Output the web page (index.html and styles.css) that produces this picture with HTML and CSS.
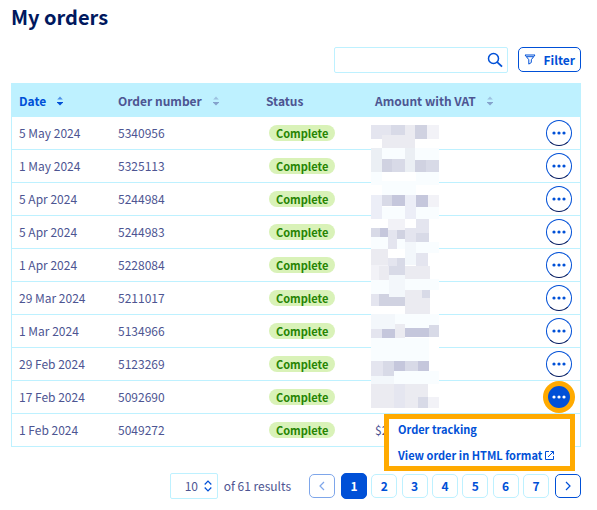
FILE: index.html
```html
<!DOCTYPE html>
<html lang="en">
<head>
    <meta charset="UTF-8">
    <title>My orders</title>
    <link rel="stylesheet" href="styles.css">
</head>
<body>

    <svg class="defs" aria-hidden="true">
        <symbol id="sort" viewBox="0 0 6 10">
            <path opacity="0.6" d="M0.2 3.6 L3 0.6 L5.8 3.6z"/>
            <path d="M0 6 H6 V6.6 L3 9.6 L0 6.6z"/>
        </symbol>
        <symbol id="dots" viewBox="0 0 14 4">
            <circle cx="2" cy="2" r="1.6"/>
            <circle cx="7" cy="2" r="1.6"/>
            <circle cx="12" cy="2" r="1.6"/>
        </symbol>
    </svg>

    <h1 class="title">My orders</h1>

    <div class="toolbar">
        <div class="search">
            <input type="text" class="search-input" aria-label="Search orders">
            <button class="search-btn" aria-label="Search">
                <svg width="16" height="16" viewBox="0 0 16 16"><circle cx="6.5" cy="6.5" r="5" fill="none" stroke="currentColor" stroke-width="1.5"/><path d="M10.2 10.2 L15 14.6" stroke="currentColor" stroke-width="1.8"/></svg>
            </button>
        </div>
        <button class="filter-btn">
            <svg width="12" height="12" viewBox="0 0 12 12"><path d="M1 1 H11 L7.3 5.7 V8.5 L4.8 10.1 V5.7z M2.5 2.7 H9.5" fill="none" stroke="currentColor" stroke-width="1" stroke-linejoin="round"/></svg>
            Filter
        </button>
    </div>

    <div class="table-box">
        <table class="orders">
            <colgroup>
                <col class="col-date">
                <col class="col-number">
                <col class="col-status">
                <col>
                <col class="col-actions">
            </colgroup>
            <thead>
                <tr>
                    <th><button class="sort-btn active">Date <svg><use href="#sort"/></svg></button></th>
                    <th><button class="sort-btn">Order number <svg><use href="#sort"/></svg></button></th>
                    <th>Status</th>
                    <th><button class="sort-btn">Amount with VAT <svg><use href="#sort"/></svg></button></th>
                    <th></th>
                </tr>
            </thead>
            <tbody>
                <tr><td>5 May 2024</td><td>5340956</td><td><span class="badge">Complete</span></td><td></td><td class="actions"><button class="more" aria-label="Actions"><svg><use href="#dots"/></svg></button></td></tr>
                <tr><td>1 May 2024</td><td>5325113</td><td><span class="badge">Complete</span></td><td></td><td class="actions"><button class="more" aria-label="Actions"><svg><use href="#dots"/></svg></button></td></tr>
                <tr><td>5 Apr 2024</td><td>5244984</td><td><span class="badge">Complete</span></td><td></td><td class="actions"><button class="more" aria-label="Actions"><svg><use href="#dots"/></svg></button></td></tr>
                <tr><td>5 Apr 2024</td><td>5244983</td><td><span class="badge">Complete</span></td><td></td><td class="actions"><button class="more" aria-label="Actions"><svg><use href="#dots"/></svg></button></td></tr>
                <tr><td>1 Apr 2024</td><td>5228084</td><td><span class="badge">Complete</span></td><td></td><td class="actions"><button class="more" aria-label="Actions"><svg><use href="#dots"/></svg></button></td></tr>
                <tr><td>29 Mar 2024</td><td>5211017</td><td><span class="badge">Complete</span></td><td></td><td class="actions"><button class="more" aria-label="Actions"><svg><use href="#dots"/></svg></button></td></tr>
                <tr><td>1 Mar 2024</td><td>5134966</td><td><span class="badge">Complete</span></td><td></td><td class="actions"><button class="more" aria-label="Actions"><svg><use href="#dots"/></svg></button></td></tr>
                <tr><td>29 Feb 2024</td><td>5123269</td><td><span class="badge">Complete</span></td><td></td><td class="actions"><button class="more" aria-label="Actions"><svg><use href="#dots"/></svg></button></td></tr>
                <tr>
                    <td>17 Feb 2024</td><td>5092690</td><td><span class="badge">Complete</span></td><td></td>
                    <td class="actions">
                        <button class="more open" aria-label="Actions" aria-expanded="true"><svg><use href="#dots"/></svg></button>
                        <div class="menu">
                            <a href="#">Order tracking</a>
                            <a href="#">View order in HTML format
                                <svg width="9" height="9" viewBox="0 0 9 9"><path d="M4 0.5 H0.5 V8.5 H8.5 V5 M5.5 0.5 H8.5 V3.5 M8.5 0.5 L3 6" fill="none" stroke="currentColor"/></svg>
                            </a>
                        </div>
                    </td>
                </tr>
                <tr><td>1 Feb 2024</td><td>5049272</td><td><span class="badge">Complete</span></td><td>$2</td><td class="actions"><button class="more" aria-label="Actions"><svg><use href="#dots"/></svg></button></td></tr>
            </tbody>
        </table>

        <!-- pixelated amounts -->
        <svg class="mosaic" viewBox="33 30 204 849" preserveAspectRatio="none" shape-rendering="crispEdges" aria-hidden="true">
            <path fill="#fff" d="M33 30h204v849H33z"/>
            <path fill="#f9fdff" d="M66 99h69v33H66zM165 99h72v36h-72zM33 171h33v38H33zM168 171h69v38h-69zM66 199h102v41H66zM66 276h69v36H66zM168 276h69v36h-69zM33 366h51v36H33zM111 372h24v30h-24zM168 381h69v33h-69zM33 495h54v42H33zM135 492h102v33H135zM105 597h132v42H105zM33 669h174v69H33zM102 768h135v39H102z"/>
            <path fill="#f3f7fb" d="M33 597h72v45H33zM135 381h33v69h-33zM87 480h48v66H87zM33 783h69v24H33z"/>
            <path fill="#f2f2f7" d="M201 30h36v42h-36zM204 240h33v36h-33zM84 312h51v33H84zM33 435h51v18H33zM33 453h24v42H33zM204 846h33v33h-33z"/>
            <path fill="#ebeff4" d="M33 99h33v72H33zM135 99h30v72h-30z"/>
            <path fill="#eceef7" d="M33 240h33v72H33zM135 240h33v72h-33z"/>
            <path fill="#e4e5ef" d="M33 30h33v42H33zM66 30h27v30H66zM168 312h39v42h-39zM84 345h27v57H84zM135 339h33v42h-33zM84 429h27v24H84zM168 414h36v39h-36zM33 537h24v36H33zM33 642h33v27H33zM33 738h36v45H33z"/>
            <path fill="#ebebf1" d="M135 30h30v69h-30zM66 60h69v39H66zM33 402h51v48H33zM57 453h30v42H57zM135 453h75v39h-75zM135 525h75v72h-75zM105 627h30v42h-30zM33 807h171v72H33z"/>
            <path fill="#d8dae7" d="M93 30h42v30H93zM66 240h30v33H66zM33 339h27v27H33zM111 429h24v24h-24zM87 453h48v27H87zM168 354h39v27h-39zM198 135h39v36h-39zM96 132h39v39H96zM186 525h24v24h-24zM207 630h30v36h-30zM69 738h33v45H69zM135 738h39v30h-39zM174 846h30v33h-30z"/>
            <path fill="#d0d2e1" d="M165 30h36v42h-36zM66 132h30v39H66zM165 135h33v36h-33zM57 537h30v36H57zM87 546h48v27H87zM111 345h24v27h-24z"/>
            <path fill="#c5c7dc" d="M96 240h39v33H96zM168 240h36v36h-36zM60 339h24v27H60zM66 642h39v27H66zM135 639h72v27h-72zM102 738h33v30h-33zM174 738h33v30h-33z"/>
            <path fill="#e5e6f0" d="M102 807h33v72h-33z"/>
        </svg>
    </div>

    <div class="footer">
        <div class="per-page">
            <div class="select-box">
                <select class="page-size" id="page-size"><option>10</option></select>
                <svg width="8" height="12" viewBox="0 0 8 12"><path d="M0.7 4.5 L4 1 L7.3 4.5 M0.7 7.5 L4 11 L7.3 7.5" fill="none" stroke="currentColor" stroke-width="1.2"/></svg>
            </div>
            <label for="page-size">of 61 results</label>
        </div>
        <nav class="pager">
            <button class="arrow" aria-label="Previous" disabled><svg width="6" height="10" viewBox="0 0 6 10"><path d="M5 1 L1 5 L5 9" fill="none" stroke="currentColor" stroke-width="1.2"/></svg></button>
            <div class="pages">
                <button class="page current">1</button>
                <button class="page">2</button>
                <button class="page">3</button>
                <button class="page">4</button>
                <button class="page">5</button>
                <button class="page">6</button>
                <button class="page">7</button>
            </div>
            <button class="arrow" aria-label="Next"><svg width="6" height="10" viewBox="0 0 6 10"><path d="M1 1 L5 5 L1 9" fill="none" stroke="currentColor" stroke-width="1.2"/></svg></button>
        </nav>
    </div>

</body>
</html>
```
FILE: styles.css
```css
* {
    box-sizing: border-box;
}
body {
    margin: 0;
    padding: 3px 16px 8px 11px;
    font-family: "Noto Sans CJK SC", "Noto Sans", sans-serif;
    font-size: 12px;
    line-height: 18px;
    color: #4d5592;
    background: #fff;
}
button, input, select {
    font: inherit;
    color: #0050d7;
    margin: 0;
    padding: 0;
    background: none;
    border: none;
}
.defs {
    display: none;
}
.title {
    margin: 0 0 16px;
    font-size: 20px;
    line-height: 28px;
    font-weight: 700;
    color: #00185e;
}
.toolbar {
    display: flex;
    justify-content: flex-end;
    gap: 10px;
    margin-bottom: 10px;
}
.search {
    display: flex;
    width: 174px;
    height: 26px;
    border: 1px solid #bef1ff;
    border-radius: 2px;
}
.search-input {
    flex: 1;
    min-width: 0;
    padding-left: 8px;
}
.search-btn {
    display: flex;
    align-items: center;
    padding: 0 4px;
}
.filter-btn {
    display: flex;
    align-items: center;
    gap: 8px;
    height: 25px;
    padding: 0 5px;
    border: 1px solid #0050d7;
    border-radius: 5px;
    line-height: 16px;
    font-weight: 700;
}
.table-box {
    position: relative;
}
.orders {
    width: 100%;
    table-layout: fixed;
    border-collapse: separate;
    border-spacing: 0;
    border: 1px solid #bef1ff;
    border-bottom: none;
}
.col-date {
    width: 99px;
}
.col-number {
    width: 148px;
}
.col-status {
    width: 109px;
}
.col-actions {
    width: 44px;
}
.orders th {
    height: 33px;
    padding: 0 7px;
    text-align: left;
    font-weight: 700;
    background: #bef1ff;
}
.orders td {
    height: 33px;
    padding: 0 7px;
    border-bottom: 1px solid #bef1ff;
}
.sort-btn {
    display: flex;
    align-items: center;
    gap: 11px;
    font-weight: 700;
    color: #4d5592;
    white-space: nowrap;
}
.sort-btn svg {
    width: 6px;
    height: 10px;
    fill: #85a2cc;
}
.sort-btn.active {
    color: #0050d7;
}
.sort-btn.active svg {
    fill: #0050d7;
}
.badge {
    display: block;
    width: fit-content;
    margin-left: 3px;
    padding: 0 7px;
    line-height: 16px;
    border-radius: 8px;
    font-size: 11px;
    font-weight: 700;
    color: #268403;
    background: #d9f2b8;
}
.orders .actions {
    position: relative;
    padding-right: 8px;
}
.more {
    display: flex;
    align-items: center;
    justify-content: center;
    width: 26px;
    height: 26px;
    margin-left: auto;
    border: 1px solid #0050d7;
    border-bottom-color: #00185e;
    border-radius: 50%;
}
.more svg {
    width: 14px;
    height: 4px;
    fill: #0050d7;
}
.more.open {
    background: #0050d7;
    border: 2px solid #fa0;
    box-shadow: 0 0 0 3px #fa0;
}
.more.open svg {
    fill: #fff;
}
.menu {
    position: absolute;
    z-index: 2;
    top: 33px;
    right: 5px;
    width: 191px;
    padding: 1px 9px 2px;
    border: 5px solid #fa0;
    background: #fff;
}
.menu a {
    display: block;
    padding-bottom: 8px;
    font-size: 11px;
    font-weight: 700;
    color: #0050d7;
    text-decoration: none;
    white-space: nowrap;
}
.menu a:last-child {
    padding-bottom: 0;
}
.mosaic {
    position: absolute;
    top: 42px;
    left: 360px;
    width: 68px;
    height: 283px;
}
.footer {
    display: flex;
    justify-content: flex-end;
    align-items: center;
    gap: 18px;
    margin-top: 26px;
}
.per-page {
    display: flex;
    align-items: center;
    gap: 6px;
    line-height: 16px;
}
.select-box {
    position: relative;
    color: #0050d7;
}
.select-box svg {
    position: absolute;
    top: 7px;
    right: 6px;
    pointer-events: none;
}
.page-size {
    display: block;
    appearance: none;
    width: 48px;
    height: 26px;
    padding-left: 14px;
    border: 1px solid #bef1ff;
    border-radius: 2px;
    color: #4d5592;
}
.pager {
    display: flex;
    align-items: center;
    gap: 6px;
}
.pages {
    display: flex;
    justify-content: space-between;
    align-items: center;
    width: 208px;
}
.page {
    width: 26px;
    height: 24px;
    border: 1px solid #bef1ff;
    border-radius: 5px;
    line-height: 16px;
    font-weight: 700;
}
.page.current {
    height: 26px;
    color: #fff;
    background: #0050d7;
    border-color: #0050d7;
}
.arrow {
    display: flex;
    align-items: center;
    justify-content: center;
    width: 26px;
    height: 24px;
    border: 1px solid #0050d7;
    border-radius: 5px;
}
.arrow:disabled {
    opacity: 0.5;
}
```
